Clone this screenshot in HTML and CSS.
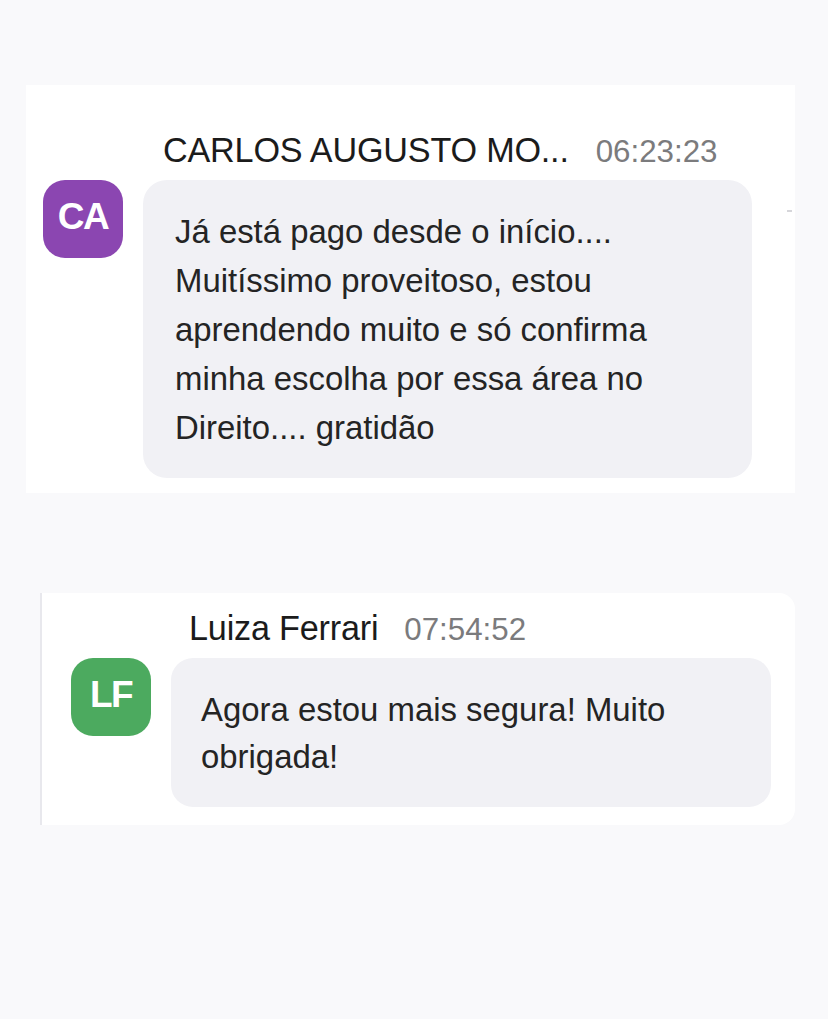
FILE: index.html
```html
<!DOCTYPE html>
<html lang="pt-BR">
<head>
    <meta charset="UTF-8">
    <meta name="viewport" content="width=device-width, initial-scale=1.0">
    <title>Comentários</title>
    <link rel="stylesheet" href="styles.css">
</head>
<body>
    <div class="feed">
        <div class="msg msg-first">
            <div class="msg-head">
                <span class="msg-name">CARLOS AUGUSTO MO...</span>
                <span class="msg-time">06:23:23</span>
            </div>
            <div class="avatar avatar-purple">CA</div>
            <div class="bubble">Já está pago desde o início.... Muitíssimo proveitoso, estou aprendendo muito e só confirma minha escolha por essa área no Direito.... gratidão</div>
            <span class="scroll-dot"></span>
        </div>

        <div class="msg msg-reply">
            <div class="msg-head">
                <span class="msg-name">Luiza Ferrari</span>
                <span class="msg-time">07:54:52</span>
            </div>
            <div class="avatar avatar-green">LF</div>
            <div class="bubble">Agora estou mais segura! Muito obrigada!</div>
        </div>
    </div>
</body>
</html>
```

FILE: styles.css
```css
body {
    margin: 0;
    font-family: 'Liberation Sans', Arial, sans-serif;
    background-color: #f9f9fb;
    color: #222;
}

.feed {
    padding-top: 85px;
}

.msg {
    position: relative;
    display: grid;
    grid-template-columns: 80px auto;
    column-gap: 20px;
    row-gap: 11px;
    background: #fff;
    box-sizing: border-box;
}

.msg-first {
    margin-left: 26px;
    width: 769px;
    padding: 46px 0 15px 17px;
}

.msg-reply {
    margin: 100px 0 0 40px;
    width: 755px;
    padding: 16px 0 18px 29px;
    border-left: 2px solid #e8e8ed;
    border-radius: 0 16px 16px 0;
}

.msg-head {
    grid-column: 2;
    display: flex;
    align-items: baseline;
    gap: 27px;
    height: 38px;
    padding-left: 20px;
    white-space: nowrap;
}

.msg-reply .msg-head {
    padding-left: 18px;
    gap: 26px;
}

.msg-name {
    font-size: 34.2px;
    color: #1b1b1b;
    letter-spacing: -0.2px;
}

.msg-time {
    font-size: 31.3px;
    color: #7b7b7d;
}

.avatar {
    grid-column: 1;
    width: 80px;
    height: 78px;
    border-radius: 22px;
    display: flex;
    align-items: center;
    justify-content: center;
    color: #fff;
    font-size: 37px;
    font-weight: bold;
    letter-spacing: -1.5px;
    padding-bottom: 5px;
    box-sizing: border-box;
}

.avatar-purple {
    background: #8b46b1;
}

.avatar-green {
    background: #4caa5f;
}

.bubble {
    grid-column: 2;
    width: 609px;
    box-sizing: border-box;
    padding: 27px 32px 26px;
    background: #f1f1f5;
    border-radius: 24px;
    font-size: 32.9px;
    line-height: 49px;
    color: #242424;
}

.msg-reply .bubble {
    width: 600px;
    padding: 28px 30px 27px;
    line-height: 47px;
    border-radius: 22px;
}

.scroll-dot {
    position: absolute;
    right: 3px;
    top: 125px;
    width: 5px;
    height: 2px;
    background: #d6d6da;
}
```
